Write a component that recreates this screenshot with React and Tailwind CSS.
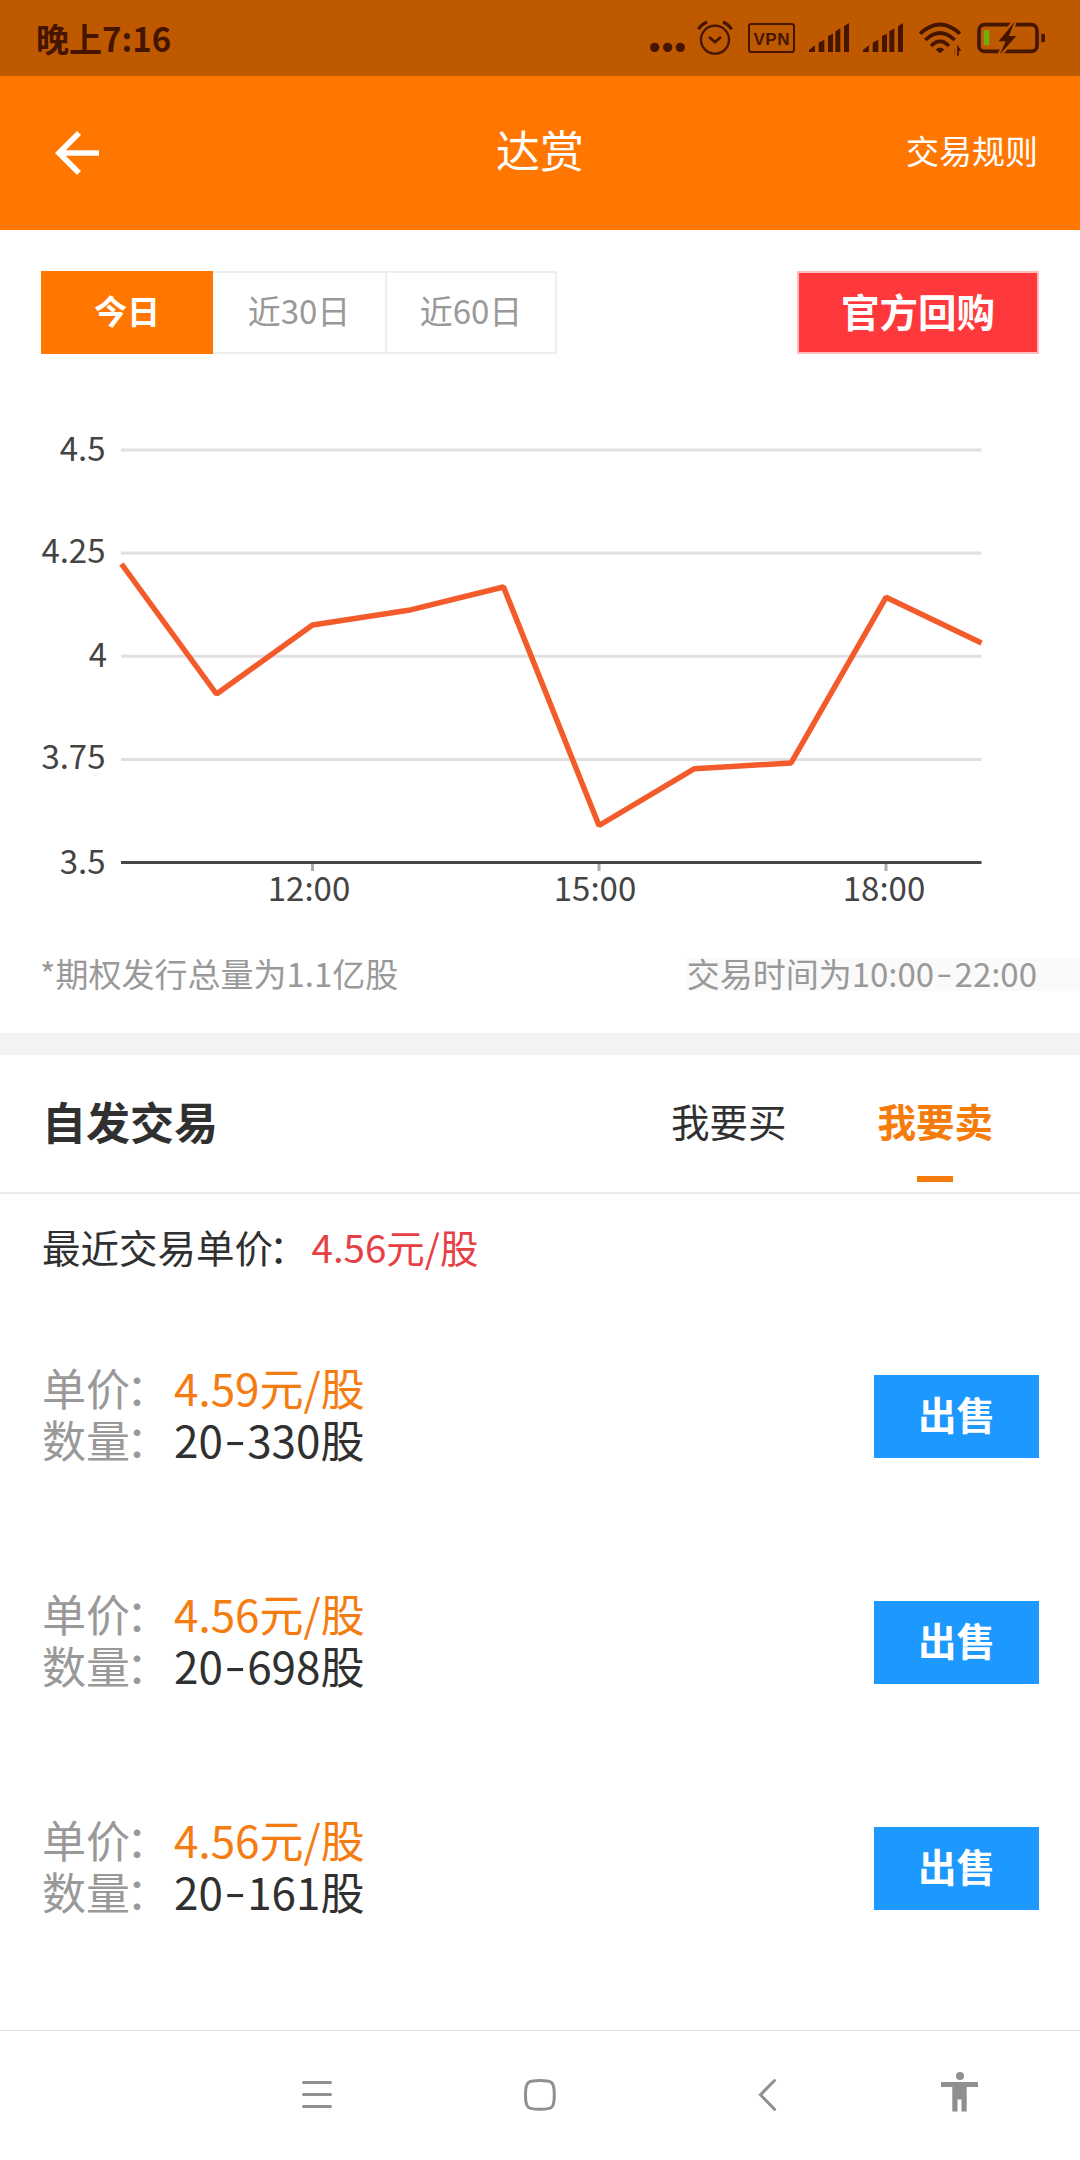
const ranges = ['今日', '近30日', '近60日'];

const gridLines = [
  { label: '4.5',  y: 450,   textY: 460.5 },
  { label: '4.25', y: 553,   textY: 563 },
  { label: '4',    y: 656.3, textY: 667 },
  { label: '3.75', y: 759.5, textY: 769 },
];

const ticks = [
  { label: '12:00', x: 312.5, textX: 309 },
  { label: '15:00', x: 599,   textX: 595 },
  { label: '18:00', x: 886,   textX: 884 },
];

const points = [
  [121.5, 564], [216.5, 694], [312.5, 625], [408.5, 610.3], [503.5, 587],
  [599, 825.5], [694.5, 768.7], [791, 763], [886, 597.3], [981.5, 643],
];

const offers = [
  { id: 1, price: '4.59', min: 20, max: 330 },
  { id: 2, price: '4.56', min: 20, max: 698 },
  { id: 3, price: '4.56', min: 20, max: 161 },
];

function Signal({ x }) {
  return (
    <g transform={`translate(${x} 0)`} fill="#461500">
      <path d="M0 156V150L18 136V156Z" />
      <path d="M29 156V128L46 119V156Z" />
      <path d="M57 156V108L72 101V156Z" />
      <path d="M79 156V94L94 85V156Z" />
      <path d="M105 156V79L120 69V156Z" />
    </g>
  );
}

function StatusIcons() {
  return (
    <svg className="w-[397px] h-10 shrink-0" viewBox="60 54 1191 120" fill="none" stroke="#461500">
      <g fill="#461500" stroke="none">
        <circle cx="74" cy="142" r="14" />
        <circle cx="113" cy="142" r="14" />
        <circle cx="151" cy="142" r="14" />
      </g>

      <circle cx="255" cy="119" r="42" strokeWidth="7" />
      <path d="M237 111L255 126L273 111" strokeWidth="8" />
      <path d="M205 88Q214 73 231 66M305 88Q296 73 279 66" strokeWidth="9" />

      <rect x="357" y="72" width="135" height="84" rx="7" strokeWidth="6" />
      <text x="424.5" y="134" textAnchor="middle" textLength="108" fontSize="51" fontWeight="700"
        fontFamily="Liberation Sans, sans-serif" fill="#461500" stroke="none">VPN</text>

      <g stroke="none">
        <Signal x={537} />
        <Signal x={699} />
      </g>

      <g strokeWidth="11">
        <path d="M870 101Q930 46 990 101" />
        <path d="M886 120Q930 78 974 120" />
        <path d="M903 138Q930 110 957 138" />
      </g>
      <path d="M930 160L917 149Q930 136 943 149Z" fill="#461500" stroke="none" />
      <path d="M984 167V142L991 153" strokeWidth="5" />
      <path d="M974 146V164" strokeWidth="4" opacity="0.3" />

      <rect x="1047" y="74" width="174" height="80" rx="17" strokeWidth="11" />
      <path d="M1234 101H1241Q1245 101 1245 106V122Q1245 127 1241 127H1234Z" fill="#461500" stroke="none" />
      <rect x="1061" y="90" width="17" height="46" rx="5" fill="#6fae0c" stroke="none" />
      <path d="M1153 66L1106 124H1127L1110 163L1159 108H1137Z" fill="#461500" stroke="#bf5900" strokeWidth="14" />
      <path d="M1153 66L1106 124H1127L1110 163L1159 108H1137Z" fill="#461500" stroke="none" />
    </svg>
  );
}

function PriceChart() {
  return (
    <svg className="block w-full h-[594px]" viewBox="0 354 1080 594" fontSize="33" fill="#444">
      {gridLines.map((g) => (
        <g key={g.label}>
          <line x1="121" x2="981.5" y1={g.y} y2={g.y} stroke="#e0e0e0" strokeWidth="3" />
          <text x={g.label === '4' ? 107 : 105.5} y={g.textY} textAnchor="end">{g.label}</text>
        </g>
      ))}
      <text x="105.5" y="873.5" textAnchor="end">3.5</text>
      {ticks.map((t) => (
        <g key={t.label}>
          <line x1={t.x} x2={t.x} y1="863" y2="871" stroke="#aaa" strokeWidth="3" />
          <text x={t.textX} y="901" textAnchor="middle">{t.label}</text>
        </g>
      ))}
      <line x1="121" x2="981.5" y1="862.5" y2="862.5" stroke="#464646" strokeWidth="3" />
      <polyline points={points.map((p) => p.join(',')).join(' ')} fill="none"
        stroke="#f35b2a" strokeWidth="5.5" strokeLinejoin="bevel" />
    </svg>
  );
}

// full-width colon, pulled towards the label; the margins keep the line's width
function Colon() {
  return <span className="-ml-1 mr-1">：</span>;
}

function OfferRow({ offer }) {
  return (
    <div className="flex items-center justify-between h-[226px] pl-[42px] pr-[41px] pb-[2px]">
      <div className="text-[44px] leading-[52.5px] text-[#999] pb-[6px]">
        <p>单价<Colon /><span className="text-[#f57c10]">{offer.price}元/股</span></p>
        <p>
          数量<Colon />
          <span className="text-[#303030]">
            {offer.min}<span className="inline-block px-[4.5px] scale-x-[1.4] -translate-y-[2px]">-</span>{offer.max}股
          </span>
        </p>
      </div>
      <button className="w-[165px] h-[83px] pb-[5px] bg-[#1c98ff] text-white text-[38.5px] leading-none font-bold">出售</button>
    </div>
  );
}

function NavBar() {
  return (
    <nav className="h-[130px] border-t border-[#e0e0e0] pt-px">
      <svg className="block w-full h-32" viewBox="0 2032 1080 128" fill="none" stroke="#8f8f8f" strokeWidth="3" strokeLinecap="round">
        <path d="M303.5 2082.5H330.5M303.5 2094.5H330.5M303.5 2106.5H330.5" />
        <path d="M540 2080.5C552.5 2080.5 554.3 2082 554.3 2095C554.3 2108 552.5 2109.3 540 2109.3C527.5 2109.3 525.5 2108 525.5 2095C525.5 2082 527.5 2080.5 540 2080.5Z" />
        <path d="M774.5 2080.5L760.5 2094.8L774.5 2109.3" />
        <g fill="#8f8f8f" stroke="none">
          <circle cx="960" cy="2076" r="4" />
          <path d="M941 2082H978V2087H966.7V2111.5H961.5V2099.5H957.5V2111.5H952.3V2087H941Z" />
        </g>
      </svg>
    </nav>
  );
}

export default function App() {
  return (
    <div className="w-[1080px] h-[2160px] flex flex-col bg-white overflow-hidden font-['Noto_Sans_CJK_SC',sans-serif]">
      <div className="h-[76px] shrink-0 flex items-center justify-between bg-[#bf5900] pl-9 pr-[33px]">
        <span className="text-[33px] leading-none font-bold text-[#461500]">晚上7:16</span>
        <StatusIcons />
      </div>

      <header className="h-[154px] shrink-0 grid grid-cols-3 items-center bg-[#ff7700] text-white pl-[54px] pr-[42px]">
        <svg className="w-12 h-12" viewBox="54 129 48 48" fill="none" stroke="currentColor" strokeWidth="5.6">
          <path d="M79 133L59 153L79 173M59 153H99" />
        </svg>
        <h1 className="text-[44px] leading-none text-center pr-3 pb-2">达赏</h1>
        <span className="text-[33px] leading-none text-right pb-[6px]">交易规则</span>
      </header>

      <main className="flex-1 flex flex-col">
        <section className="h-[803px] shrink-0 pt-[41px]">
          <div className="flex justify-between px-[41px]">
            <div className="flex h-[83px] text-[33px] leading-none">
              {ranges.map((r, i) => (
                <button key={r}
                  className={i === 0
                    ? 'w-[172px] pb-[4px] bg-[#ff7700] text-white font-bold'
                    : 'w-[172px] pb-[4px] border-2 border-[#eee] text-[#999] [&:nth-child(2)]:border-x-0'}>
                  {r}
                </button>
              ))}
            </div>
            <button className="w-[242px] h-[83px] pb-[5px] border-2 border-[#ffbcbc] bg-[#ff383b] text-white text-[38.5px] leading-none font-bold">
              官方回购
            </button>
          </div>
          <PriceChart />
          <div className="flex items-center justify-between pl-[40px] mt-[10px] h-[33px] text-[33px] leading-[30px] text-[#999]">
            <span className="pb-[3px]">*期权发行总量为1.1亿股</span>
            <span className="bg-[#fafafa] pr-[43px] pb-[3px]">
              交易时间为10:00<span className="inline-block px-[4.5px] scale-x-[1.4] -translate-y-[2px]">-</span>22:00
            </span>
          </div>
        </section>

        <div className="h-[22px] shrink-0 bg-[#f3f3f3]" />

        <section className="h-[139px] shrink-0 flex items-center justify-between border-b-2 border-[#ebebeb] pl-[42px] pr-[87px]">
          <h2 className="text-[44px] leading-none font-bold text-[#303030] pb-[6px]">自发交易</h2>
          <div className="flex gap-[91px] text-[38.5px] leading-none pb-[7px]">
            <span className="text-[#303030]">我要买</span>
            <span className="relative font-bold text-[#f57c0a]">
              我要卖
              <i className="absolute left-1/2 -translate-x-1/2 top-[75px] w-9 h-[6px] bg-[#f57c0a]" />
            </span>
          </div>
        </section>

        <p className="h-[110px] shrink-0 flex items-center pl-[42px] pb-[5px] text-[38.5px] leading-none text-[#303030]">
          最近交易单价<Colon /><span className="text-[#e64045]">4.56元/股</span>
        </p>

        <section className="flex-1">
          {offers.map((o) => <OfferRow key={o.id} offer={o} />)}
        </section>
      </main>

      <NavBar />
    </div>
  );
}
